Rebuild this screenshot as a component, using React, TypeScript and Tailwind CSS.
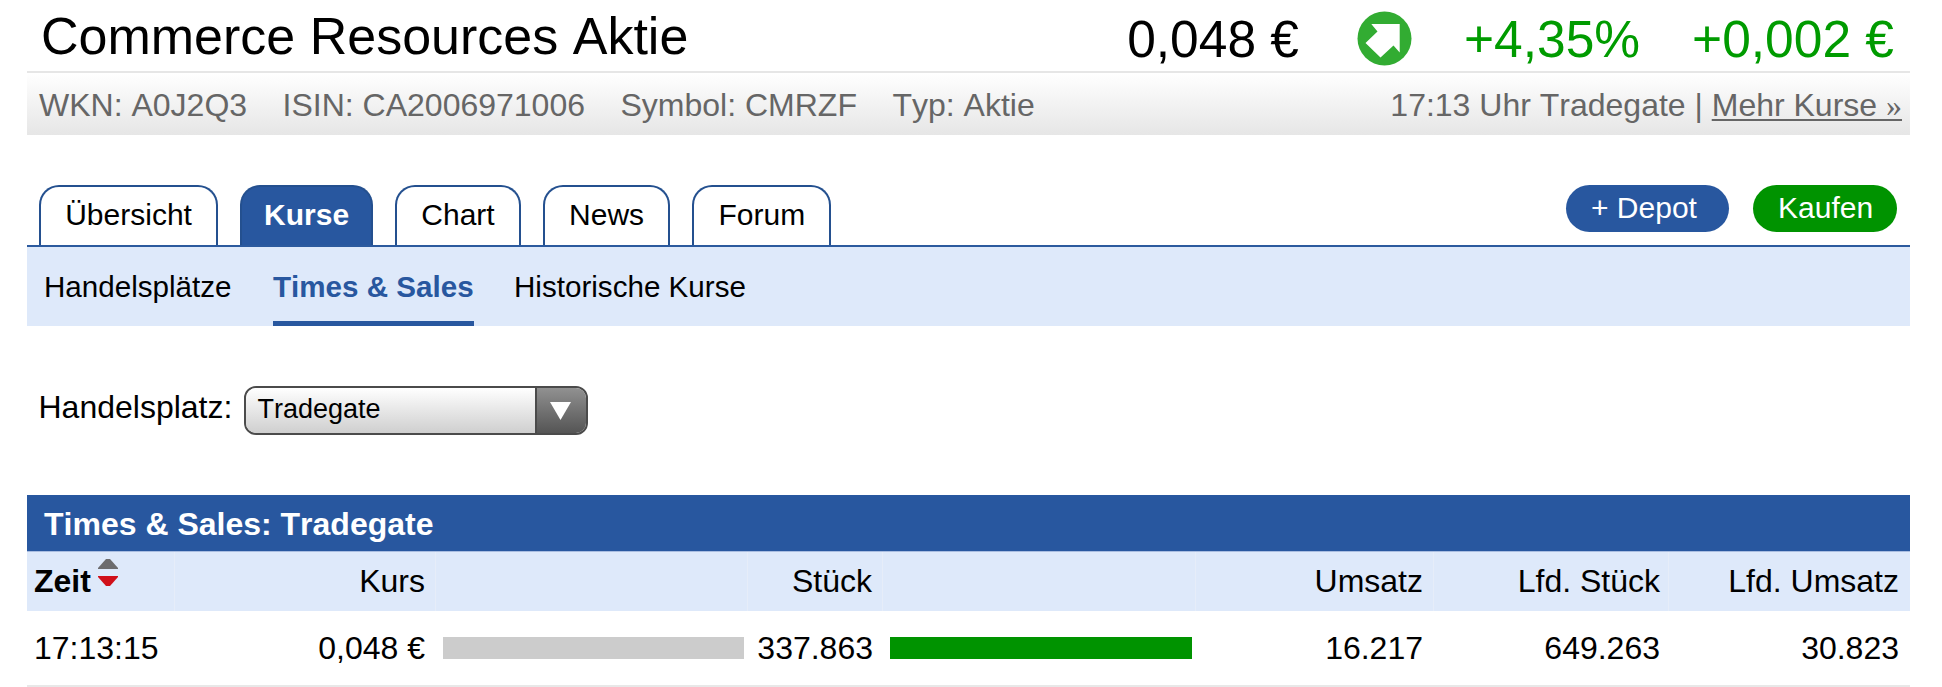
const tabs = ["Übersicht", "Kurse", "Chart", "News", "Forum"];

function UpIcon() {
  return (
    <svg className="ml-[58px] mr-[52px] h-[55px] w-[55px]" viewBox="0 0 55 55">
      <circle cx="27.5" cy="27.5" r="27" fill="#32ac32" />
      <path d="M14.3 13H42.7V41.5L36.5 34.5L23.5 46.5L8.5 32L20.5 20.5Z" fill="#fff" />
    </svg>
  );
}

function SortIcon() {
  return (
    <svg className="mb-[17px] ml-[7px] h-[27px] w-5" viewBox="0 0 20 27">
      <path d="M0 10V9L8 0H12L20 9V10Z" fill="#6c6c6e" />
      <path d="M0 17H20V18L12 27H8L0 18Z" fill="#d0101a" />
    </svg>
  );
}

export default function App() {
  const columns = "grid grid-cols-[148px_261px_312px_135px_313px_238px_235px_241px]";
  const head = "flex items-center justify-end border-r border-[#e6edf9] pr-2.5 pb-0.5";
  return (
    <div className="h-[687px] w-[1942px] overflow-hidden bg-white pl-[27px] pr-8 font-['Liberation_Sans',Arial,sans-serif] text-[32px] whitespace-nowrap text-black [font-kerning:none]">
      <header className="flex h-[73px] items-center border-b-2 border-[#e6e6e6] text-[52px] leading-[71px]">
        <h1 className="flex-1 pt-0.5 pl-3.5">Commerce Resources Aktie</h1>
        <div className="flex items-center pt-1.5 pr-4 text-[51.5px]">
          <span className="pt-0.5">0,048 €</span>
          <UpIcon />
          <span className="mr-[52px] pt-0.5 text-[#009b00]">+4,35%</span>
          <span className="pt-0.5 text-[#009b00]">+0,002 €</span>
        </div>
      </header>

      <section className="flex h-[62px] items-center gap-[35.5px] bg-linear-to-b from-white to-[#e6e6e6] pt-0.5 pr-2 pl-3 text-[#666]">
        <span>WKN: A0J2Q3</span>
        <span>ISIN: CA2006971006</span>
        <span>Symbol: CMRZF</span>
        <span>Typ: Aktie</span>
        <span className="ml-auto">
          17:13 Uhr Tradegate |{" "}
          <a className="underline decoration-2 underline-offset-[3px]">
            Mehr Kurse <span className="font-['Liberation_Serif',serif]">»</span>
          </a>
        </span>
      </section>

      <nav className="mt-[50px] flex h-[62px] justify-between border-b-2 border-[#2c5a9e] text-[30px]">
        <div className="flex gap-[22px] pl-3">
          {tabs.map((t) => (
            <a
              key={t}
              className={
                t === "Kurse"
                  ? "flex h-[60px] items-center rounded-t-[20px] border-2 border-b-0 border-[#24508f] bg-[#28579f] px-[22px] pb-[3px] font-bold text-white"
                  : "flex h-[60px] items-center rounded-t-[20px] border-2 border-b-0 border-[#24508f] px-[24.2px] pb-[3px]"
              }
            >
              {t}
            </a>
          ))}
        </div>
        <div className="flex gap-6 pr-[13px] text-white">
          <a className="flex h-[47px] w-[163px] items-center rounded-full bg-[#28579f] pb-0.5 pl-[25px]">+ Depot</a>
          <a className="flex h-[47px] w-36 items-center rounded-full bg-[#009300] pb-0.5 pl-[25px]">Kaufen</a>
        </div>
      </nav>

      <nav className="flex h-[79px] bg-[#dee9fa] pl-[17px] text-[29.6px]">
        <a className="flex w-[189px] items-center pt-0.5">Handelsplätze</a>
        <a className="ml-10 flex w-[201px] items-center border-b-[5px] border-[#28579f] pt-[7px] font-bold text-[#28579f]">
          Times &amp; Sales
        </a>
        <a className="ml-10 flex items-center pt-0.5">Historische Kurse</a>
      </nav>

      <div className="mt-[60px] flex h-[49px] items-center pl-[11.5px]">
        <span className="mb-[7px] w-[195px]">Handelsplatz:</span>
        <div className="ml-[10px] flex h-[49px] w-[344px] overflow-hidden rounded-xl border-[2.5px] border-[#4b4b4b] text-[27px]">
          <div className="flex flex-1 items-center bg-linear-to-b from-white to-[#cfcfcf] pb-[3px] pl-3">Tradegate</div>
          <div className="flex w-[51px] items-center border-l-2 border-[#4b4b4b] bg-linear-to-b from-[#919191] to-[#555] pl-[13px]">
            <svg className="h-[18px] w-[21px]" viewBox="0 0 21 18">
              <path d="M0 0H21L10.5 18Z" fill="#fff" />
            </svg>
          </div>
        </div>
      </div>

      <section className="mt-[60px]">
        <h2 className="flex h-[57px] items-center border-b border-[#a9bde0] bg-[#28579f] pt-0.5 pl-[17px] font-bold text-white">
          Times &amp; Sales: Tradegate
        </h2>
        <div className={`${columns} h-[59px] bg-[#dee9fa]`}>
          <div className="flex items-center border-r border-[#e6edf9] pb-0.5 pl-[7px] font-bold">
            Zeit
            <SortIcon />
          </div>
          <div className={head}>Kurs</div>
          <div className={head} />
          <div className={head}>Stück</div>
          <div className={head} />
          <div className={head}>Umsatz</div>
          <div className="flex items-center justify-end border-r border-[#e6edf9] pr-2 pb-0.5">Lfd. Stück</div>
          <div className="flex items-center justify-end pr-[11px] pb-0.5">Lfd. Umsatz</div>
        </div>
        <div className={`${columns} h-[76px] items-center border-b-2 border-[#e8e8e8]`}>
          <div className="pl-[7px]">17:13:15</div>
          <div className="pr-[11px] text-right">0,048 €</div>
          <div className="ml-[7px] h-[22px] w-[301px] bg-[#ccc]" />
          <div className="pr-2.5 text-right">337.863</div>
          <div className="ml-[7px] h-[22px] w-[302px] bg-[#009300]" />
          <div className="pr-[11px] text-right">16.217</div>
          <div className="pr-[9px] text-right">649.263</div>
          <div className="pr-[11px] text-right">30.823</div>
        </div>
      </section>
    </div>
  );
}
